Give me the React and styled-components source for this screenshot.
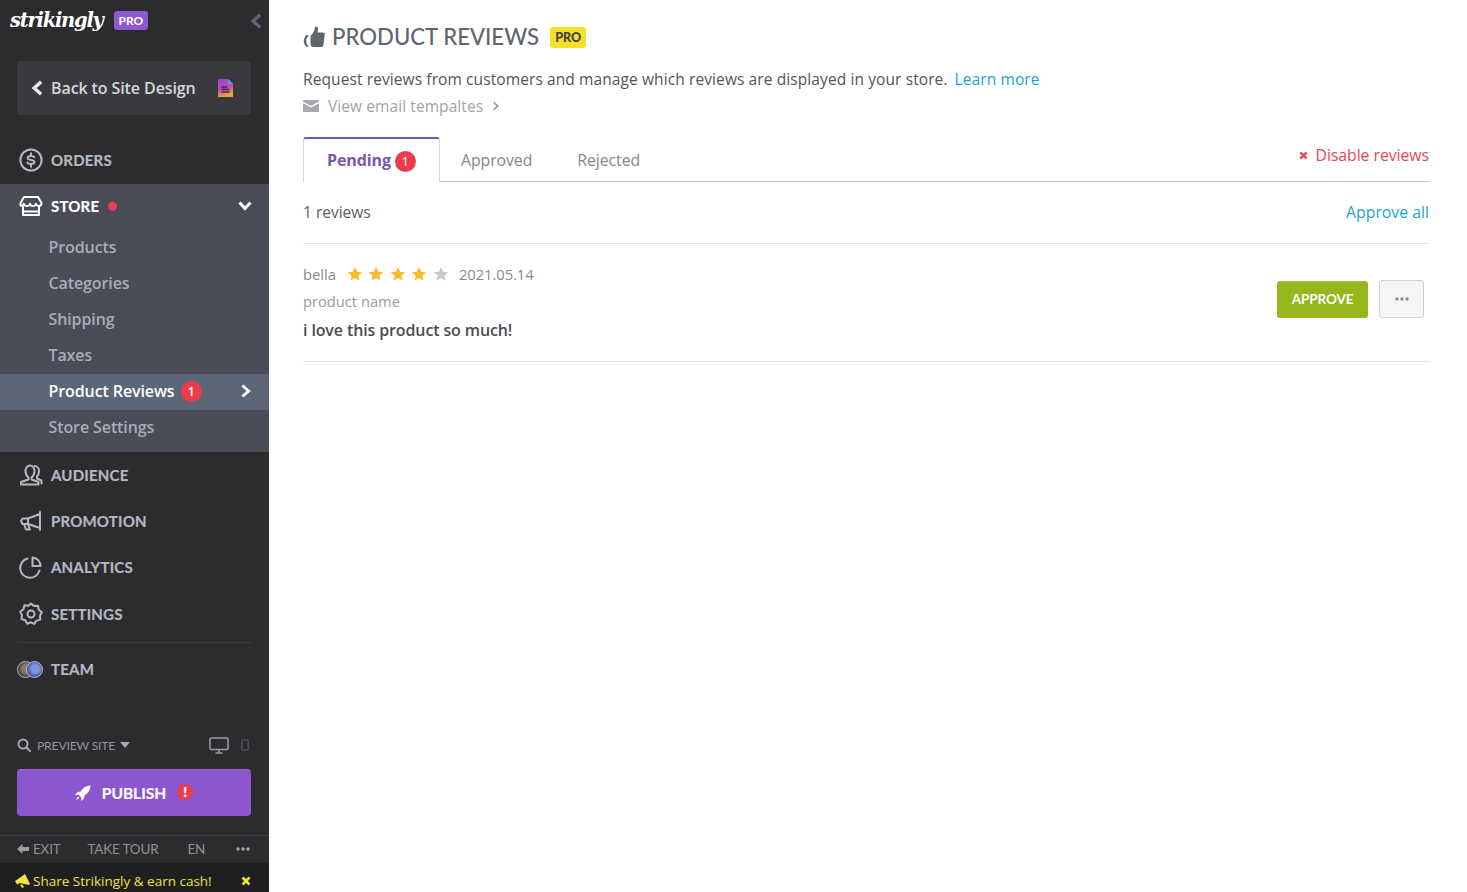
import React from "react";
import styled, { createGlobalStyle } from "styled-components";

const Global = createGlobalStyle`
  html, body { margin: 0; padding: 0; height: 100%; background: #fff; }
  body { font-family: "Open Sans", "Liberation Sans", sans-serif; overflow: hidden; }
  * { box-sizing: border-box; }
`;

const Page = styled.div`display: flex; width: 1467px; height: 892px; background: #fff;`;
const Sidebar = styled.aside`
  width: 269px; height: 892px; background: #2c2c2e; display: flex; flex-direction: column; flex: none;
`;
const LogoRow = styled.div`
  height: 42px; display: flex; align-items: center; padding: 0 5px 0 10px; position: relative;
`;
const Logo = styled.span`
  font-family: "DejaVu Serif", "Liberation Serif", serif; font-style: italic; font-weight: 700; font-size: 19.5px;
  letter-spacing: -1.25px; color: #fff; line-height: 1; width: 104px; margin-top: -1px;
`;
const ProTag = styled.span`
  background: ${p => p.$yellow ? "#f5e02a" : "#8e59cf"}; color: ${p => p.$yellow ? "#3d3f44" : "#fff"};
  font-family: Lato, sans-serif; font-weight: ${p => p.$yellow ? 900 : 700}; font-size: 12px; line-height: 19px;
  height: 19px; padding: 0 4.5px; border-radius: 3px; display: inline-block;
`;
const LogoPro = styled(ProTag)`margin-top: -1px;`;
const Collapse = styled.span`margin-left: auto; display: flex; margin-top: -1px;`;
const BackButton = styled.div`
  margin: 19px 18px 0 17px; height: 54px; background: #3a3a3e; border-radius: 3px; display: flex; align-items: center;
  padding: 0 17px 0 12px; color: #d5d8de; font-size: 16px; font-weight: 600; letter-spacing: -.1px;
`;
const BackLabel = styled.span`margin-left: 6px; flex: 1;`;
const NavRow = styled.div`
  height: ${p => p.$h || 46}px; display: flex; align-items: center; padding-left: 18px; flex: none;
  margin-top: ${p => p.$mt || 0}px;
  color: ${p => p.$on ? "#fff" : "#b4b8c2"}; font-family: Lato, sans-serif; font-weight: 700; font-size: 15px; letter-spacing: .2px;
  -webkit-text-stroke: .2px currentColor;
`;
const NavIcon = styled.span`width: 25px; height: 25px; display: flex; align-items: center; justify-content: center; margin-right: 8px; flex: none;`;
const Dot = styled.span`width: 9px; height: 9px; border-radius: 50%; background: #ec4050; margin-left: 9px;`;
const ChevronEnd = styled.span`margin-left: auto; margin-right: ${p => p.$mr || 17}px; display: flex;`;
const StoreGap = styled.div`height: 1px;`;
const StoreGroup = styled.div`background: #494b57; height: 268px; padding-bottom: 6px;`;
const SubRow = styled.div`
  height: 36px; display: flex; align-items: center; padding: 0 0 2px 48.5px; font-size: 16px; font-weight: 600; letter-spacing: -.1px;
  color: ${p => p.$on ? "#fff" : "#a9adba"}; background: ${p => p.$on ? "#5c6677" : "transparent"};
`;
const Badge = styled.span`
  width: 21px; height: 21px; border-radius: 50%; background: #e93d4e; color: #fff; font-size: 12px; font-weight: 600;
  display: inline-flex; align-items: center; justify-content: center; flex: none; letter-spacing: 0;
`;
const SubBadge = styled(Badge)`margin-left: 6px;`;
const AlertBadge = styled(Badge)`width: 16px; height: 16px; font-size: 13px; font-weight: 800; margin-top: -2px;`;
const SubList = styled.div`padding-top: 2px;`;
const Rule = styled.div`height: 1px; background: #3d3d41; margin: 5px 18px 0;`;
const Avatars = styled.span`position: relative; display: block; width: 26px; height: 17px; margin-left: -1px;`;
const Avatar = styled.span`
  position: absolute; top: 0; width: 17px; height: 17px; border-radius: 50%; left: ${p => p.$x}px;
  background: radial-gradient(circle at 55% 45%, ${p => p.$a} 0 35%, ${p => p.$b} 70%);
  border: 1px solid #b9b9c2;
`;
const Footer = styled.div`margin-top: auto; display: flex; flex-direction: column;`;
const PreviewRow = styled.div`
  height: 24px; display: flex; align-items: center; padding: 0 20px 0 17px; color: #92949c; font-family: Lato, sans-serif; font-size: 12.2px;
  letter-spacing: -.2px;
`;
const PreviewLabel = styled.span`margin-left: 6px; margin-right: 5px;`;
const Devices = styled.span`margin-left: auto; display: flex; align-items: center; gap: 12px;`;
const Publish = styled.div`
  margin: 12px 18px 0 17px; height: 47px; background: #8c56ce; border-radius: 4px; display: flex; align-items: center; justify-content: center;
  color: #fff; font-family: Lato, sans-serif; font-weight: 700; font-size: 15.5px; border-top: 1px solid #9a6ad6;
  -webkit-text-stroke: .2px currentColor;
`;
const PublishText = styled.span`margin: 0 11px 0 11px;`;
const ExitRow = styled.div`
  margin-top: 19px; height: 28px; border-top: 1px solid #3e3e42; display: flex; align-items: center; padding: 0 17px 2px; color: #8f929a;
  font-family: Lato, sans-serif; font-size: 13.5px; letter-spacing: -.2px;
`;
const ExitItem = styled.span`margin-left: ${p => p.$gap || 0}px; display: flex; align-items: center;`;
const ExitMore = styled(ExitItem)`margin-left: auto; margin-right: 1px;`;
const ShareBar = styled.div`
  height: 29px; background: #1f1f21; display: flex; align-items: center; padding: 7px 18px 0 15px; color: #f2e33c; font-size: 13.5px;
`;
const ShareText = styled.span`margin-left: 1px;`;
const ShareClose = styled.span`margin-left: auto; display: flex;`;

const Main = styled.main`flex: 1; padding: 0 38px 0 34px; color: #50555e;`;
const TitleRow = styled.div`height: 74px; display: flex; align-items: center;`;
const Title = styled.h1`
  margin: 0 11px 0 7px; font-family: Lato, sans-serif; font-weight: 500; font-size: 22.2px; color: #60656e; line-height: 1;
`;
const TitlePro = styled(ProTag)`height: 21px; line-height: 21px; padding: 0 5px; font-size: 12.5px;`;
const Description = styled.div`font-size: 15.5px; line-height: 22px; height: 22px; margin-top: -6px; color: #50555e; letter-spacing: .1px;`;
const LearnMore = styled.span`color: #1aa5d0; margin-left: 7px;`;
const EmailLink = styled.div`
  margin-top: 5px; height: 22px; display: flex; align-items: center; font-size: 15.5px; letter-spacing: .08px; color: #a0a3a9;
`;
const EmailText = styled.span`margin: 0 8px 0 9px;`;
const Tabs = styled.div`
  margin-top: 20px; height: 45px; display: flex; align-items: flex-end; border-bottom: 1px solid #c5c7c9; position: relative;
`;
const ActiveTab = styled.div`
  width: 137px; height: 45px; margin-bottom: -1px; background: #fff; border: 1px solid #d8dadc; border-bottom: none; border-top: 2px solid #7b55b0;
  border-radius: 3px 3px 0 0; display: flex; align-items: center; padding: 0 0 2px 23px; color: #7c55b3; font-weight: 700; font-size: 16px; letter-spacing: -.1px;
`;
const TabBadge = styled(Badge)`margin-left: 4px; font-weight: 400; font-size: 12.5px; margin-top: 3px;`;
const Tab = styled.div`
  height: 44px; display: flex; align-items: center; padding-top: 2px; margin-left: ${p => p.$gap}px; color: #84878e; font-size: 15.8px; letter-spacing: -.05px;
`;
const Disable = styled.div`
  margin-left: auto; align-self: flex-start; height: 36px; display: flex; align-items: center; color: #dc4a5c; font-size: 15.8px; letter-spacing: -.05px;
`;
const DisableText = styled.span`margin-left: 8px;`;
const CountRow = styled.div`
  height: 62px; padding-bottom: 2px; border-bottom: 1px solid #e4e5e7; display: flex; align-items: center; justify-content: space-between; font-size: 15.5px; color: #5a5e66;
`;
const ApproveAll = styled.span`color: #1aa5d0; font-size: 15.8px;`;
const ReviewRow = styled.div`
  height: 118px; border-bottom: 1px solid #e4e5e7; display: flex; justify-content: space-between; align-items: flex-start;
`;
const ReviewInfo = styled.div`padding-top: 19px;`;
const MetaLine = styled.div`display: flex; align-items: center; height: 22px; color: #878a91; font-size: 14.8px;`;
const Stars = styled.span`display: flex; gap: 5.6px; margin: 0 10px 0 10.500px;`;
const DateText = styled.span`letter-spacing: -.08px;`;
const ProductName = styled.div`height: 22px; line-height: 22px; margin-top: 5px; font-size: 14.7px; color: #999ca2;`;
const ReviewText = styled.div`height: 22px; line-height: 22px; margin-top: 6.500px; font-size: 16px; font-weight: 600; color: #484c54; letter-spacing: -.12px;`;
const Actions = styled.div`display: flex; align-items: center; gap: 11px; padding: 36px 5px 0 0;`;
const Approve = styled.div`
  width: 91px; height: 37px; background: #96b71b; border-radius: 3px; color: #fff; font-family: Lato, sans-serif; font-weight: 700; font-size: 13.5px;
  display: flex; align-items: center; justify-content: center; border-top: 1px solid #a6c438; letter-spacing: -.1px; padding-bottom: 2px;
`;
const More = styled.div`
  width: 45px; height: 38px; background: #f5f5f6; border: 1px solid #cfd1d3; border-radius: 3px; display: flex; align-items: center; justify-content: center;
`;

const Ico = ({ size = 24, vb = "0 0 24 24", sw = 2, stroke = "#b4b8c2", fill = "none", children }) => (
  <svg width={size} height={size} viewBox={vb} fill={fill} stroke={stroke} strokeWidth={sw} strokeLinecap="round" strokeLinejoin="round">{children}</svg>
);
const Chevron = ({ dir = "left", color = "#fff", size = 14, sw = 3 }) => {
  const d = { left: "M9.5 2.5 4.5 7l5 4.5", right: "M4.5 2.5 9.5 7l-5 4.5", down: "M2.5 4.5 7 9.5l4.5-5" }[dir];
  return <Ico size={size} vb="0 0 14 14" sw={sw} stroke={color}><path d={d} strokeLinecap="square" strokeLinejoin="miter" /></Ico>;
};
const Star = ({ on }) => (
  <svg width="16" height="16" viewBox="0 0 24 24" fill={on ? "#f5bd2c" : "#c9cacd"}><path d="M12 1.5l3.2 7 7.6.8-5.7 5.1 1.6 7.5L12 18.1l-6.7 3.8 1.6-7.5L1.200 9.300l7.600-.8z" /></svg>
);
const Dots = ({ color }) => (
  <svg width="16" height="6" viewBox="0 0 16 6" fill={color}><circle cx="3" cy="3" r="1.700" /><circle cx="8" cy="3" r="1.700" /><circle cx="13" cy="3" r="1.700" /></svg>
);
const Cross = ({ color, size = 9 }) => (
  <svg width={size} height={size} viewBox="0 0 10 10" stroke={color} strokeWidth="2.600" fill="none"><path d="M1.500 1.500l7 7M8.500 1.500l-7 7" /></svg>
);

const subs = ["Products", "Categories", "Shipping", "Taxes"];

export default function App() {
  return (
    <Page>
      <Global />
      <Sidebar>
        <LogoRow>
          <Logo>strikingly</Logo>
          <LogoPro>PRO</LogoPro>
          <Collapse><Chevron color="#5e6472" size={16} sw={3} /></Collapse>
        </LogoRow>
        <BackButton>
          <Chevron color="#e6e8ec" size={16} />
          <BackLabel>Back to Site Design</BackLabel>
          <svg width="17" height="18" viewBox="0 0 17 18">
            <defs><linearGradient id="docg" x1="0" y1="0" x2="0.300" y2="1"><stop offset="0" stopColor="#9a3ee0" /><stop offset=".6" stopColor="#c34fb0" /><stop offset="1" stopColor="#f3a13a" /></linearGradient></defs>
            <path d="M1 0h10l5 5v13H1z" fill="url(#docg)" /><path d="M11 0l5 5h-5z" fill="#5a9be8" />
            <path d="M4.500 8h6M4.500 10.500h8M4.500 13h8" stroke="#3a2a5e" strokeWidth="1.300" />
          </svg>
        </BackButton>
        <NavRow $h={46} $mt={22}>
          <NavIcon>
            <Ico><circle cx="12" cy="12" r="10.600" /><path d="M15.500 9.200c-.5-.9-1.800-1.300-3.500-1.300-2 0-3.400.8-3.400 2 0 3 7 1.200 7 4.200 0 1.300-1.500 2-3.600 2-1.700 0-3.100-.5-3.700-1.500" /><path d="M12 5.200v2.500M12 16.200v2.600" /></Ico>
          </NavIcon>
          ORDERS
        </NavRow>
        <StoreGap />
        <StoreGroup>
          <NavRow $on $h={44}>
            <NavIcon>
              <Ico stroke="#fff"><path d="M5 3h14l3.500 6c0 1.800-1.200 3-2.700 3s-2.500-1-2.900-2.300c-.4 1.300-1.400 2.300-2.900 2.300s-2.600-1-3-2.300c-.4 1.300-1.500 2.300-3 2.300S5.100 11 4.700 9.700C4.300 11 3 12 1.500 11.500V9z" /><path d="M4 12v9h16v-9" /><path d="M4 17.500h16" /></Ico>
            </NavIcon>
            STORE
            <Dot />
            <ChevronEnd><Chevron dir="down" color="#fff" size={14} /></ChevronEnd>
          </NavRow>
          <SubList>
            {subs.map(s => <SubRow key={s}>{s}</SubRow>)}
            <SubRow $on>
              Product Reviews
              <SubBadge>1</SubBadge>
              <ChevronEnd $mr={16}><Chevron dir="right" color="#fff" size={14} /></ChevronEnd>
            </SubRow>
            <SubRow>Store Settings</SubRow>
          </SubList>
        </StoreGroup>
        <NavRow>
          <NavIcon>
            <Ico><path d="M9.500 14.500c-1.500-1-3-3.500-3-6.500 0-3 2-5.500 4.500-5.500s4.500 2.500 4.500 5.500c0 3-1.500 5.500-3 6.500v2l7 2.500v2.500H2v-2.500l7.500-2.500z" /><path d="M15.500 3c3 0 4.500 2.500 4.500 5s-1 4.500-2 5.500v2l4.500 2v3" /></Ico>
          </NavIcon>
          AUDIENCE
        </NavRow>
        <NavRow>
          <NavIcon>
            <Ico><path d="M21 3v18M21 5 9 9.500H3.500L2 12l1.500 3H9l12 4" /><path d="M9 9.500v5.500M5 15l2 5.500h4l-2-5" /></Ico>
          </NavIcon>
          PROMOTION
        </NavRow>
        <NavRow>
          <NavIcon>
            <Ico><path d="M8.500 3.500A9.800 9.800 0 1 0 20.500 15.500" /><path d="M13.500 2.500A8.500 8.500 0 0 1 21.500 11H13.500z" /></Ico>
          </NavIcon>
          ANALYTICS
        </NavRow>
        <NavRow $h={47}>
          <NavIcon>
            <Ico><path d="M12 1.500l3 2.600 4-.3.800 3.900 3 2.600-1.800 3.400.3 3.900-3.900 1-2.200 3.300-3.200-1.600-3.700 1.400-2-3.400-3.800-1.200.5-4-1.700-3.500 3.200-2.400.9-3.900 3.900.400z" /><circle cx="12" cy="12" r="3.500" /></Ico>
          </NavIcon>
          SETTINGS
        </NavRow>
        <Rule />
        <NavRow $h={52}>
          <NavIcon><Avatars><Avatar $x={0} $a="#8a7a70" $b="#3f3a38" /><Avatar $x={9} $a="#7f93d8" $b="#3f4f92" /></Avatars></NavIcon>
          TEAM
        </NavRow>
        <Footer>
          <PreviewRow>
            <Ico size={14} vb="0 0 14 14" stroke="#a5a8af" sw={2}><circle cx="6" cy="6" r="4.500" /><path d="M9.500 9.500 13 13" /></Ico>
            <PreviewLabel>PREVIEW SITE</PreviewLabel>
            <svg width="10" height="6" viewBox="0 0 10 6" fill="#a5a8af"><path d="M0 0h10L5 6z" /></svg>
            <Devices>
              <svg width="20" height="17" viewBox="0 0 20 17" fill="none" stroke="#9a9da4" strokeWidth="1.500"><rect x="1" y="1" width="18" height="11.500" rx="1" /><path d="M10 13v2.500M6.500 16h7" /></svg>
              <svg width="8" height="12" viewBox="0 0 8 12" fill="none" stroke="#55575c" strokeWidth="1.200"><rect x=".8" y=".8" width="6.400" height="10.400" rx="1.200" /></svg>
            </Devices>
          </PreviewRow>
          <Publish>
            <svg width="16" height="16" viewBox="0 0 16 16" fill="#fff"><path d="M15.500.5C11.500.5 8 2.500 5.500 6.500L2.500 7 0 10l3.500-.3 2.800 2.800L6 16l3-2.500.5-3C13.500 8 15.500 4.500 15.500.5z" /><path d="M3 11.500 1 15l3.500-2z" /></svg>
            <PublishText>PUBLISH</PublishText>
            <AlertBadge>!</AlertBadge>
          </Publish>
          <ExitRow>
            <svg width="12" height="12" viewBox="0 0 12 12" fill="#9a9da4"><path d="M5.500 1v3H12v4H5.500v3L0 6z" /></svg>
            <ExitItem $gap={4}>EXIT</ExitItem>
            <ExitItem $gap={27}>TAKE TOUR</ExitItem>
            <ExitItem $gap={29}>EN</ExitItem>
            <ExitMore><Dots color="#a5a8af" /></ExitMore>
          </ExitRow>
          <ShareBar>
            <svg width="17" height="14" viewBox="0 0 17 14" fill="#f2e33c"><path d="M10 0l5 10-1 1-9-2-3 1.500-2-3.500 3-2z" /><path d="M5 10.500 7 14l2-1-1.500-2.500z" /></svg>
            <ShareText>Share Strikingly &amp; earn cash!</ShareText>
            <ShareClose><Cross color="#f2e33c" size={10} /></ShareClose>
          </ShareBar>
        </Footer>
      </Sidebar>
      <Main>
        <TitleRow>
          <svg width="22" height="22" viewBox="0 0 22 22" fill="#5f646d">
            <path d="M13 .5c1.500 0 2.200 1.300 2 2.700L14.500 6.500H20c1.200 0 1.900 1 1.700 2.200l-1.400 10.500c-.2 1-1 1.800-2 1.800H10.500c-1.600 0-3-1.200-3-3V9.800c1.700-1.500 3.800-3.800 4.300-7.500.1-.9.400-1.800 1.200-1.800z" />
            <path d="M3.800 8.500C1.800 10.500.8 12.800.8 15s1 4.500 3 6l1.800-.8C4 18.900 3.200 17 3.200 15s.8-3.700 2.400-5z" />
          </svg>
          <Title>PRODUCT REVIEWS</Title>
          <TitlePro $yellow>PRO</TitlePro>
        </TitleRow>
        <Description>
          Request reviews from customers and manage which reviews are displayed in your store.
          <LearnMore>Learn more</LearnMore>
        </Description>
        <EmailLink>
          <svg width="16" height="12" viewBox="0 0 16 12" fill="#a6a9ae"><path d="M.5 0h15c.3 0 .5.200.5.500v1L8 6 0 1.500v-1C0 .200.200 0 .5 0z" /><path d="M0 3.200 8 7.600l8-4.400V11.500c0 .3-.2.500-.5.500H.5c-.3 0-.5-.2-.5-.5z" /></svg>
          <EmailText>View email tempaltes</EmailText>
          <Chevron dir="right" color="#9a9da3" size={10} sw={2.400} />
        </EmailLink>
        <Tabs>
          <ActiveTab>Pending<TabBadge>1</TabBadge></ActiveTab>
          <Tab $gap={21}>Approved</Tab>
          <Tab $gap={45}>Rejected</Tab>
          <Disable><Cross color="#dc4a5c" /><DisableText>Disable reviews</DisableText></Disable>
        </Tabs>
        <CountRow>
          <span>1 reviews</span>
          <ApproveAll>Approve all</ApproveAll>
        </CountRow>
        <ReviewRow>
          <ReviewInfo>
            <MetaLine>
              bella
              <Stars><Star on /><Star on /><Star on /><Star on /><Star /></Stars>
              <DateText>2021.05.14</DateText>
            </MetaLine>
            <ProductName>product name</ProductName>
            <ReviewText>i love this product so much!</ReviewText>
          </ReviewInfo>
          <Actions>
            <Approve>APPROVE</Approve>
            <More><Dots color="#8b8e94" /></More>
          </Actions>
        </ReviewRow>
      </Main>
    </Page>
  );
}
